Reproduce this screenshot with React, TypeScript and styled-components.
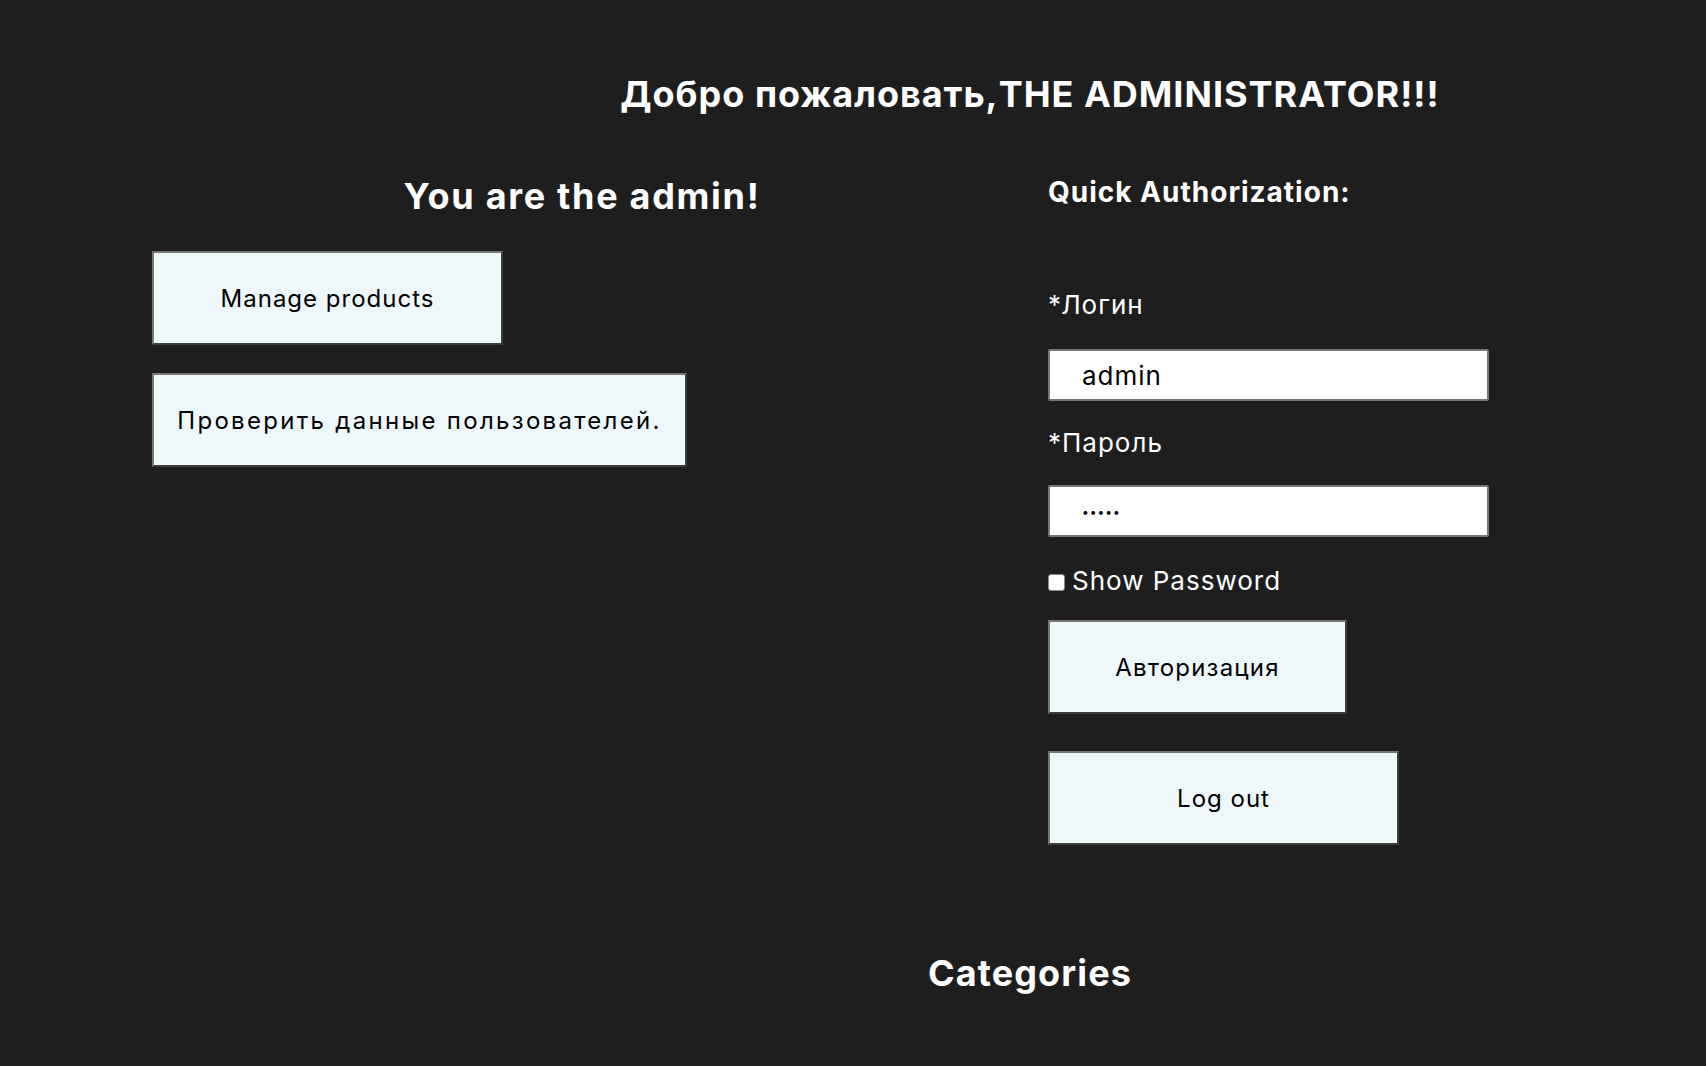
import React from "react";
import styled, { createGlobalStyle } from "styled-components";

const GlobalStyle = createGlobalStyle`
  html, body {
    margin: 0;
    padding: 0;
    background: #1e1e1e;
  }
  body {
    font-family: Inter, "Noto Sans", "DejaVu Sans", sans-serif;
    color: #ffffff;
  }
  * { box-sizing: border-box; }
`;

const Page = styled.main`
  min-height: 1066px;
  background: #1e1e1e;
  padding-top: 72px;
`;

const CenterBlock = styled.div`
  margin-left: 354px;
  width: 1352px;
  text-align: center;
`;

const Title = styled.h1`
  margin: 0;
  font-size: 36px;
  line-height: 44px;
  letter-spacing: 1px;
  font-weight: 700;
  color: #fff;
`;

const Columns = styled.div`
  display: flex;
  padding-left: 152px;
  gap: 36px;
  margin-top: 60px;
`;

const LeftColumn = styled.section`
  width: 860px;
  display: flex;
  flex-direction: column;
  align-items: flex-start;
`;

const RightColumn = styled.section`
  display: flex;
  flex-direction: column;
  align-items: flex-start;
`;

const AdminHeading = styled.h2`
  align-self: stretch;
  margin: 0;
  text-align: center;
  font-size: 36px;
  line-height: 40px;
  letter-spacing: 1.7px;
  font-weight: 700;
`;

const QuickHeading = styled.h3`
  margin: 0;
  font-size: 28px;
  line-height: 32px;
  letter-spacing: 1px;
  font-weight: 700;
`;

const ActionButton = styled.button<{ $w: number; $mt: number; $ls?: number }>`
  width: ${(p) => p.$w}px;
  height: 94px;
  margin-top: ${(p) => p.$mt}px;
  background: #eef7fa;
  color: #000;
  border-style: solid;
  border-width: 2px;
  border-color: #767676 #3c3c3c #3c3c3c #767676;
  font-family: Inter, "Noto Sans", sans-serif;
  font-size: 24px;
  letter-spacing: ${(p) => p.$ls ?? 1}px;
  font-weight: 400;
  padding: 0;
  cursor: pointer;
`;

const Label = styled.label<{ $mt: number }>`
  display: block;
  margin-top: ${(p) => p.$mt}px;
  font-size: 26px;
  line-height: 30px;
  letter-spacing: 1px;
  color: #fff;
`;

const TextInput = styled.input`
  width: 441px;
  height: 52px;
  margin-top: 29px;
  padding: 0 0 0 32px;
  border: 2px solid #767676;
  border-radius: 2px;
  background: #fff;
  color: #000;
  font-family: Inter, "Noto Sans", sans-serif;
  font-size: 26px;
  letter-spacing: 1px;
  outline: none;
`;

const PasswordInput = styled(TextInput)`
  margin-top: 27px;
  font-size: 12px;
  letter-spacing: 1px;
`;

const CheckRow = styled.label`
  display: flex;
  align-items: center;
  gap: 7px;
  margin-top: 29px;
  font-size: 26px;
  line-height: 30px;
  letter-spacing: 1px;
  color: #fff;
`;

const CheckBox = styled.input`
  appearance: none;
  width: 17px;
  height: 17px;
  margin: 3px 0 0 0;
  background: #fff;
  border: 1px solid #8a8a8a;
  border-radius: 3px;
`;

const Categories = styled.h2`
  margin: 106px 0 0;
  font-size: 36px;
  line-height: 44px;
  letter-spacing: 1.1px;
  font-weight: 700;
`;

export default function App() {
  return (
    <>
      <GlobalStyle />
      <Page>
        <CenterBlock>
          <Title>Добро пожаловать,THE ADMINISTRATOR!!!</Title>
        </CenterBlock>
        <Columns>
          <LeftColumn>
            <AdminHeading>You are the admin!</AdminHeading>
            <ActionButton $w={351} $mt={35}>Manage products</ActionButton>
            <ActionButton $w={535} $mt={28} $ls={2.3}>Проверить данные пользователей.</ActionButton>
          </LeftColumn>
          <RightColumn>
            <QuickHeading>Quick Authorization:</QuickHeading>
            <Label $mt={82} htmlFor="login">*Логин</Label>
            <TextInput id="login" type="text" defaultValue="admin" />
            <Label $mt={27} htmlFor="pass">*Пароль</Label>
            <PasswordInput id="pass" type="password" defaultValue="admin" />
            <CheckRow>
              <CheckBox type="checkbox" />
              Show Password
            </CheckRow>
            <ActionButton $w={299} $mt={24} $ls={1.2}>Авторизация</ActionButton>
            <ActionButton $w={351} $mt={37}>Log out</ActionButton>
          </RightColumn>
        </Columns>
        <CenterBlock>
          <Categories>Categories</Categories>
        </CenterBlock>
      </Page>
    </>
  );
}
